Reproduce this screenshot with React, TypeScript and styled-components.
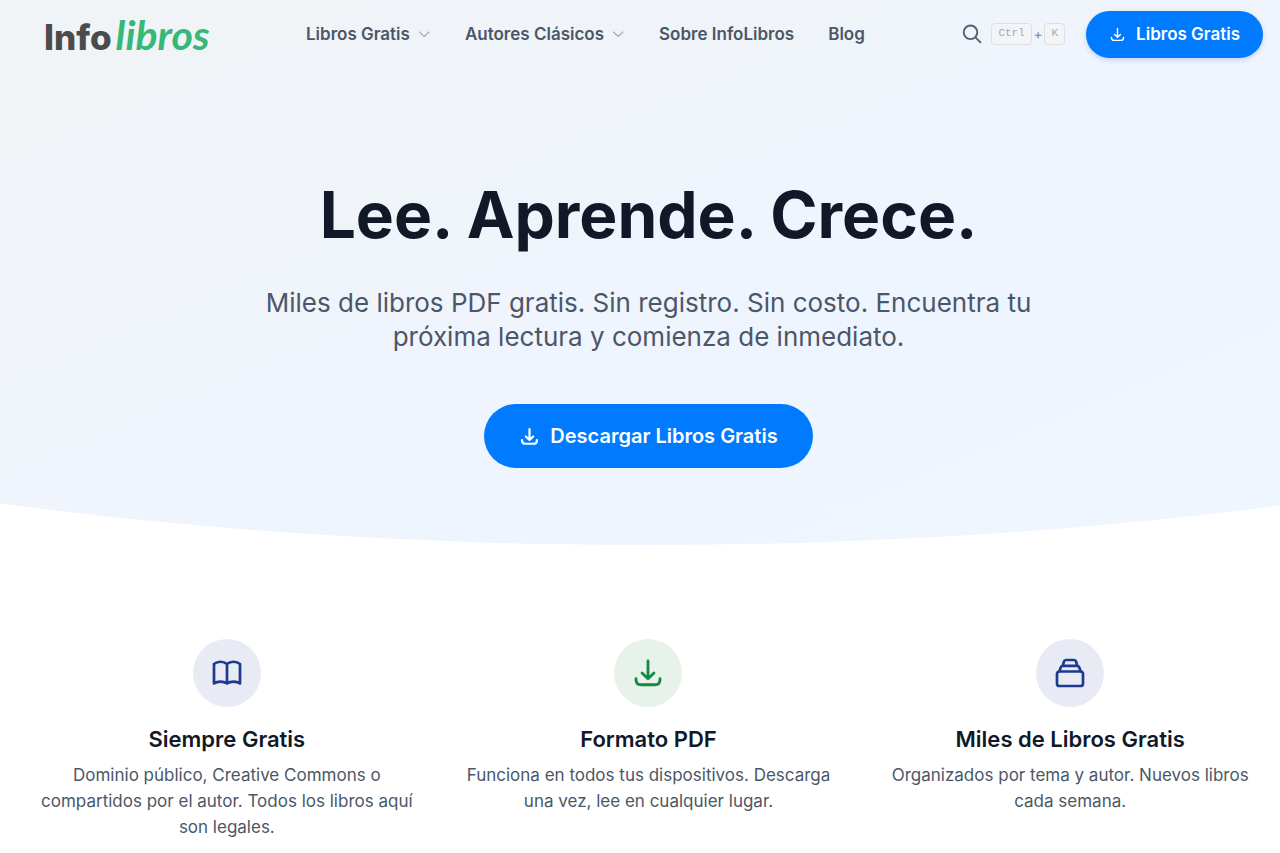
import React from "react";
import styled, { createGlobalStyle } from "styled-components";

const GlobalStyle = createGlobalStyle`
  *, *::before, *::after { box-sizing: border-box; }
  body {
    margin: 0;
    background: #ffffff;
    color: #4b5768;
    font-family: Inter, "Open Sans", sans-serif;
    overflow-x: hidden;
  }
  h1, h2, p { margin: 0; }
`;

const Hero = styled.section`
  padding-bottom: 77px;
  background: linear-gradient(to bottom right, #f0f4f7 0%, #f0f4f9 32%, #eff4fd 48%, #eef6ff 100%);
  clip-path: ellipse(132% 100% at calc(50% + 8px) 0);
`;

const Header = styled.header`
  display: flex;
  align-items: center;
  height: 68px;
  padding: 0 17px 0 44px;
`;

const Logo = styled.a`
  display: flex;
  align-items: baseline;
  gap: 4px;
  width: 262px;
  padding-top: 3px;
  color: #4b4b4b;
  font: 800 35px/44px Inter, sans-serif;
  text-decoration: none;
`;

const LogoScript = styled.span`
  color: #36b877;
  font: italic 700 41px/44px Lato, sans-serif;
`;

const Nav = styled.nav`
  display: flex;
  align-items: center;
  gap: 34px;
`;

const NavLink = styled.a`
  display: flex;
  align-items: center;
  gap: 7px;
  color: #4b5768;
  font-size: 17px;
  font-weight: 600;
  line-height: 26px;
  text-decoration: none;
  white-space: nowrap;
`;

const Actions = styled.div`
  display: flex;
  align-items: center;
  margin-left: auto;
`;

const SearchButton = styled.button`
  display: flex;
  align-items: center;
  gap: 2px;
  margin-right: 21px;
  padding: 0;
  border: 0;
  background: none;
  color: #8a919d;
  font: 500 13px/20px Inter, sans-serif;
  cursor: pointer;

  svg { margin-right: 7px; }
`;

const Key = styled.kbd`
  height: 22px;
  padding: 0 6px;
  border: 1px solid #dcdfe4;
  border-radius: 4px;
  background: #f3f4f6;
  color: #a3a9b4;
  font: 11px/18px "Liberation Mono", monospace;
`;

const PillLink = styled.a<{ $large?: boolean }>`
  display: inline-flex;
  align-items: center;
  justify-content: center;
  gap: 10px;
  height: ${(p) => (p.$large ? 64 : 47)}px;
  padding: 0 ${(p) => (p.$large ? 35 : 23)}px;
  border-radius: 32px;
  background: #007bff;
  box-shadow: ${(p) => (p.$large ? "none" : "0 2px 5px rgba(0, 80, 200, 0.2)")};
  color: #ffffff;
  font-size: ${(p) => (p.$large ? 20 : 17)}px;
  font-weight: 600;
  line-height: 26px;
  text-decoration: none;
  white-space: nowrap;
`;

const HeroBody = styled.div`
  display: flex;
  flex-direction: column;
  align-items: center;
  padding: 110px 16px 0 33px;
  text-align: center;
`;

const Title = styled.h1`
  color: #111827;
  font-size: 64px;
  font-weight: 700;
  line-height: 74px;
`;

const Lead = styled.p`
  max-width: 820px;
  margin: 34px 0 50px;
  font-size: 26px;
  line-height: 34px;
`;

const Features = styled.section`
  display: grid;
  grid-template-columns: repeat(3, 1fr);
  gap: 34px;
  padding: 94px 16px 14px 33px;
`;

const Feature = styled.article`
  display: flex;
  flex-direction: column;
  align-items: center;
  text-align: center;
`;

const Badge = styled.div<{ $green?: boolean }>`
  display: grid;
  place-items: center;
  width: 68px;
  height: 68px;
  border-radius: 50%;
  background: ${(p) => (p.$green ? "#e7f2ea" : "#e8ebf4")};
  color: ${(p) => (p.$green ? "#15893f" : "#1e3a8f")};
`;

const FeatureTitle = styled.h2`
  margin: 17px 0 8px;
  color: #111827;
  font-size: 22px;
  font-weight: 600;
  line-height: 30px;
`;

const FeatureText = styled.p`
  font-size: 17px;
  line-height: 26px;
`;

const strokeProps = {
  fill: "none",
  stroke: "currentColor",
  strokeLinecap: "round" as const,
  strokeLinejoin: "round" as const,
  "aria-hidden": true,
};

const DownloadIcon = ({ size, weight = 2 }: { size: number; weight?: number }) => (
  <svg width={size} height={size} viewBox="0 0 24 24" strokeWidth={weight} {...strokeProps}>
    <path d="M3.500 16v.5c0 2.500 1.300 3.800 3.800 3.800h9.400c2.500 0 3.800-1.300 3.800-3.800V16M12 3.500v12.500M7.800 12 12 16l4.200-4" />
  </svg>
);

const Chevron = () => (
  <svg width="14" height="14" viewBox="0 0 14 14" strokeWidth="1.100" {...strokeProps} stroke="#a3adba">
    <path d="m2.500 5 4.700 4.500L12 5" />
  </svg>
);

const SearchIcon = () => (
  <svg width="20" height="20" viewBox="0 0 20 20" strokeWidth="1.900" {...strokeProps} stroke="#566070">
    <circle cx="8.500" cy="8.300" r="6.800" />
    <path d="m13.500 13.300 5 5" />
  </svg>
);

const BookIcon = () => (
  <svg width="34" height="34" viewBox="0 0 34 34" strokeWidth="2.700" {...strokeProps}>
    <path d="M4 27.500c3.500-2.600 9.500-2.600 13 0 3.500-2.600 9.500-2.600 13 0M4 8c3.500-3 9.500-3 13 0 3.500-3 9.500-3 13 0M4 8v19.500M17 8v19.500M30 8v19.500" />
  </svg>
);

const StackIcon = () => (
  <svg width="34" height="34" viewBox="0 0 34 34" strokeWidth="2.700" {...strokeProps}>
    <rect x="4" y="15.500" width="26" height="14.500" rx="2.600" />
    <path d="M6.500 15.200 7.600 11.600c.4-1.200 1.100-1.800 2.300-1.800h14.200c1.200 0 1.900.6 2.300 1.800l1.100 3.600M9.800 9.600l1.100-4c.3-1.100.9-1.600 2-1.600h8.200c1.100 0 1.700.5 2 1.600l1.100 4" />
  </svg>
);

const features = [
  {
    title: "Siempre Gratis",
    text: "Dominio público, Creative Commons o compartidos por el autor. Todos los libros aquí son legales.",
    icon: <BookIcon />,
  },
  {
    title: "Formato PDF",
    text: "Funciona en todos tus dispositivos. Descarga una vez, lee en cualquier lugar.",
    icon: <DownloadIcon size={34} weight={2} />,
    green: true,
  },
  {
    title: "Miles de Libros Gratis",
    text: "Organizados por tema y autor. Nuevos libros cada semana.",
    icon: <StackIcon />,
  },
];

export default function App() {
  return (
    <>
      <GlobalStyle />
      <main>
        <Hero>
          <Header>
            <Logo href="#">
              Info<LogoScript>libros</LogoScript>
            </Logo>
            <Nav>
              <NavLink href="#libros">Libros Gratis <Chevron /></NavLink>
              <NavLink href="#autores">Autores Clásicos <Chevron /></NavLink>
              <NavLink href="#sobre">Sobre InfoLibros</NavLink>
              <NavLink href="#blog">Blog</NavLink>
            </Nav>
            <Actions>
              <SearchButton type="button" aria-label="Buscar">
                <SearchIcon />
                <Key>Ctrl</Key>+<Key>K</Key>
              </SearchButton>
              <PillLink href="#libros">
                <DownloadIcon size={17} />
                Libros Gratis
              </PillLink>
            </Actions>
          </Header>
          <HeroBody>
            <Title>Lee. Aprende. Crece.</Title>
            <Lead>
              Miles de libros PDF gratis. Sin registro. Sin costo. Encuentra tu próxima lectura y
              comienza de inmediato.
            </Lead>
            <PillLink href="#libros" $large>
              <DownloadIcon size={21} weight={2.5} />
              Descargar Libros Gratis
            </PillLink>
          </HeroBody>
        </Hero>
        <Features>
          {features.map((f) => (
            <Feature key={f.title}>
              <Badge $green={f.green}>{f.icon}</Badge>
              <FeatureTitle>{f.title}</FeatureTitle>
              <FeatureText>{f.text}</FeatureText>
            </Feature>
          ))}
        </Features>
      </main>
    </>
  );
}
